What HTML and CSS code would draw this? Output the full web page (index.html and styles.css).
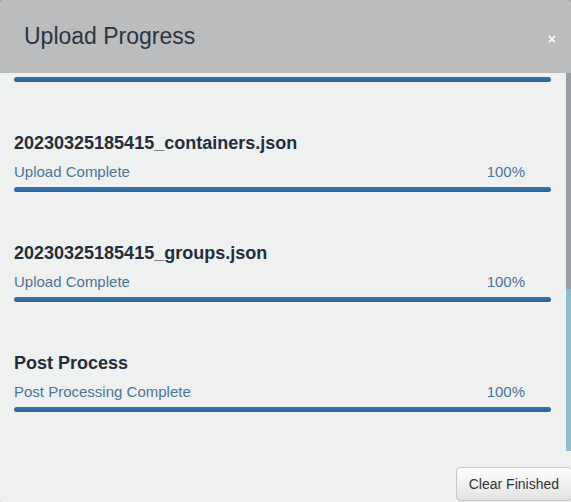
FILE: index.html
```html
<!DOCTYPE html>
<html>
<head>
<meta charset="utf-8">
<link rel="stylesheet" href="styles.css">
</head>
<body>
<div class="modal">
  <div class="modal-header">
    <h4 class="modal-title">Upload Progress</h4>
    <span class="close">×</span>
  </div>
  <div class="modal-body">
    <div class="scroll">
      <div class="bar first"></div>
      <div class="item">
        <div class="name">20230325185415_containers.json</div>
        <div class="status"><span>Upload Complete</span><span>100%</span></div>
        <div class="bar"></div>
      </div>
      <div class="item">
        <div class="name">20230325185415_groups.json</div>
        <div class="status"><span>Upload Complete</span><span>100%</span></div>
        <div class="bar"></div>
      </div>
      <div class="item">
        <div class="name">Post Process</div>
        <div class="status"><span>Post Processing Complete</span><span>100%</span></div>
        <div class="bar"></div>
      </div>
    </div>
    <div class="track">
      <div class="seg-gray"></div>
      <div class="seg-teal"></div>
    </div>
  </div>
  <div class="modal-footer">
    <button class="btn">Clear Finished</button>
  </div>
</div>
</body>
</html>
```
FILE: styles.css
```css
html, body {
  margin: 0;
  padding: 0;
  background: #a7a9ab;
  width: 571px;
  height: 502px;
  overflow: hidden;
  font-family: "Liberation Sans", Arial, sans-serif;
}
.modal {
  width: 571px;
  height: 506px;
  background: #eff0f0;
  border-radius: 6px;
  overflow: hidden;
  display: flex;
  flex-direction: column;
}
.modal-header {
  height: 73px;
  background: #bbbcbe;
  display: flex;
  align-items: center;
  justify-content: space-between;
  padding: 0 15px 0 24px;
  box-sizing: border-box;
  flex: none;
}
.modal-title {
  margin: 0;
  font-size: 23px;
  font-weight: normal;
  color: #2a3440;
  line-height: 26px;
  padding-bottom: 1px;
}
.close {
  color: #ffffff;
  font-size: 14px;
  font-weight: bold;
  line-height: 14px;
  padding-top: 4px;
}
.modal-body {
  height: 378px;
  display: flex;
  flex: none;
}
.scroll {
  flex: 1;
  padding: 4px 15px 0 14px;
}
.bar {
  height: 5px;
  border-radius: 3px;
  background: linear-gradient(#3575b0, #2a6497);
}
.item {
  margin-top: 51px;
}
.name {
  font-size: 18px;
  font-weight: bold;
  color: #232e3a;
  line-height: 20px;
}
.status {
  margin-top: 9px;
  display: flex;
  justify-content: space-between;
  padding-right: 26px;
  font-size: 15px;
  line-height: 20px;
  color: #4c7597;
  margin-bottom: 5px;
}
.track {
  width: 5px;
  display: flex;
  flex-direction: column;
}
.seg-gray {
  height: 216px;
  background: #9a9ea2;
}
.seg-teal {
  height: 162px;
  background: #8cbfc4;
}
.modal-footer {
  display: flex;
  justify-content: flex-end;
  padding-top: 16px;
}
.btn {
  font-family: "Liberation Sans", Arial, sans-serif;
  font-size: 14px;
  color: #333333;
  height: 34px;
  padding: 0 12px;
  margin-right: -1px;
  border: 1px solid #c8c8c8;
  border-radius: 4px;
  background: linear-gradient(#ffffff, #e2e2e2);
}
```
